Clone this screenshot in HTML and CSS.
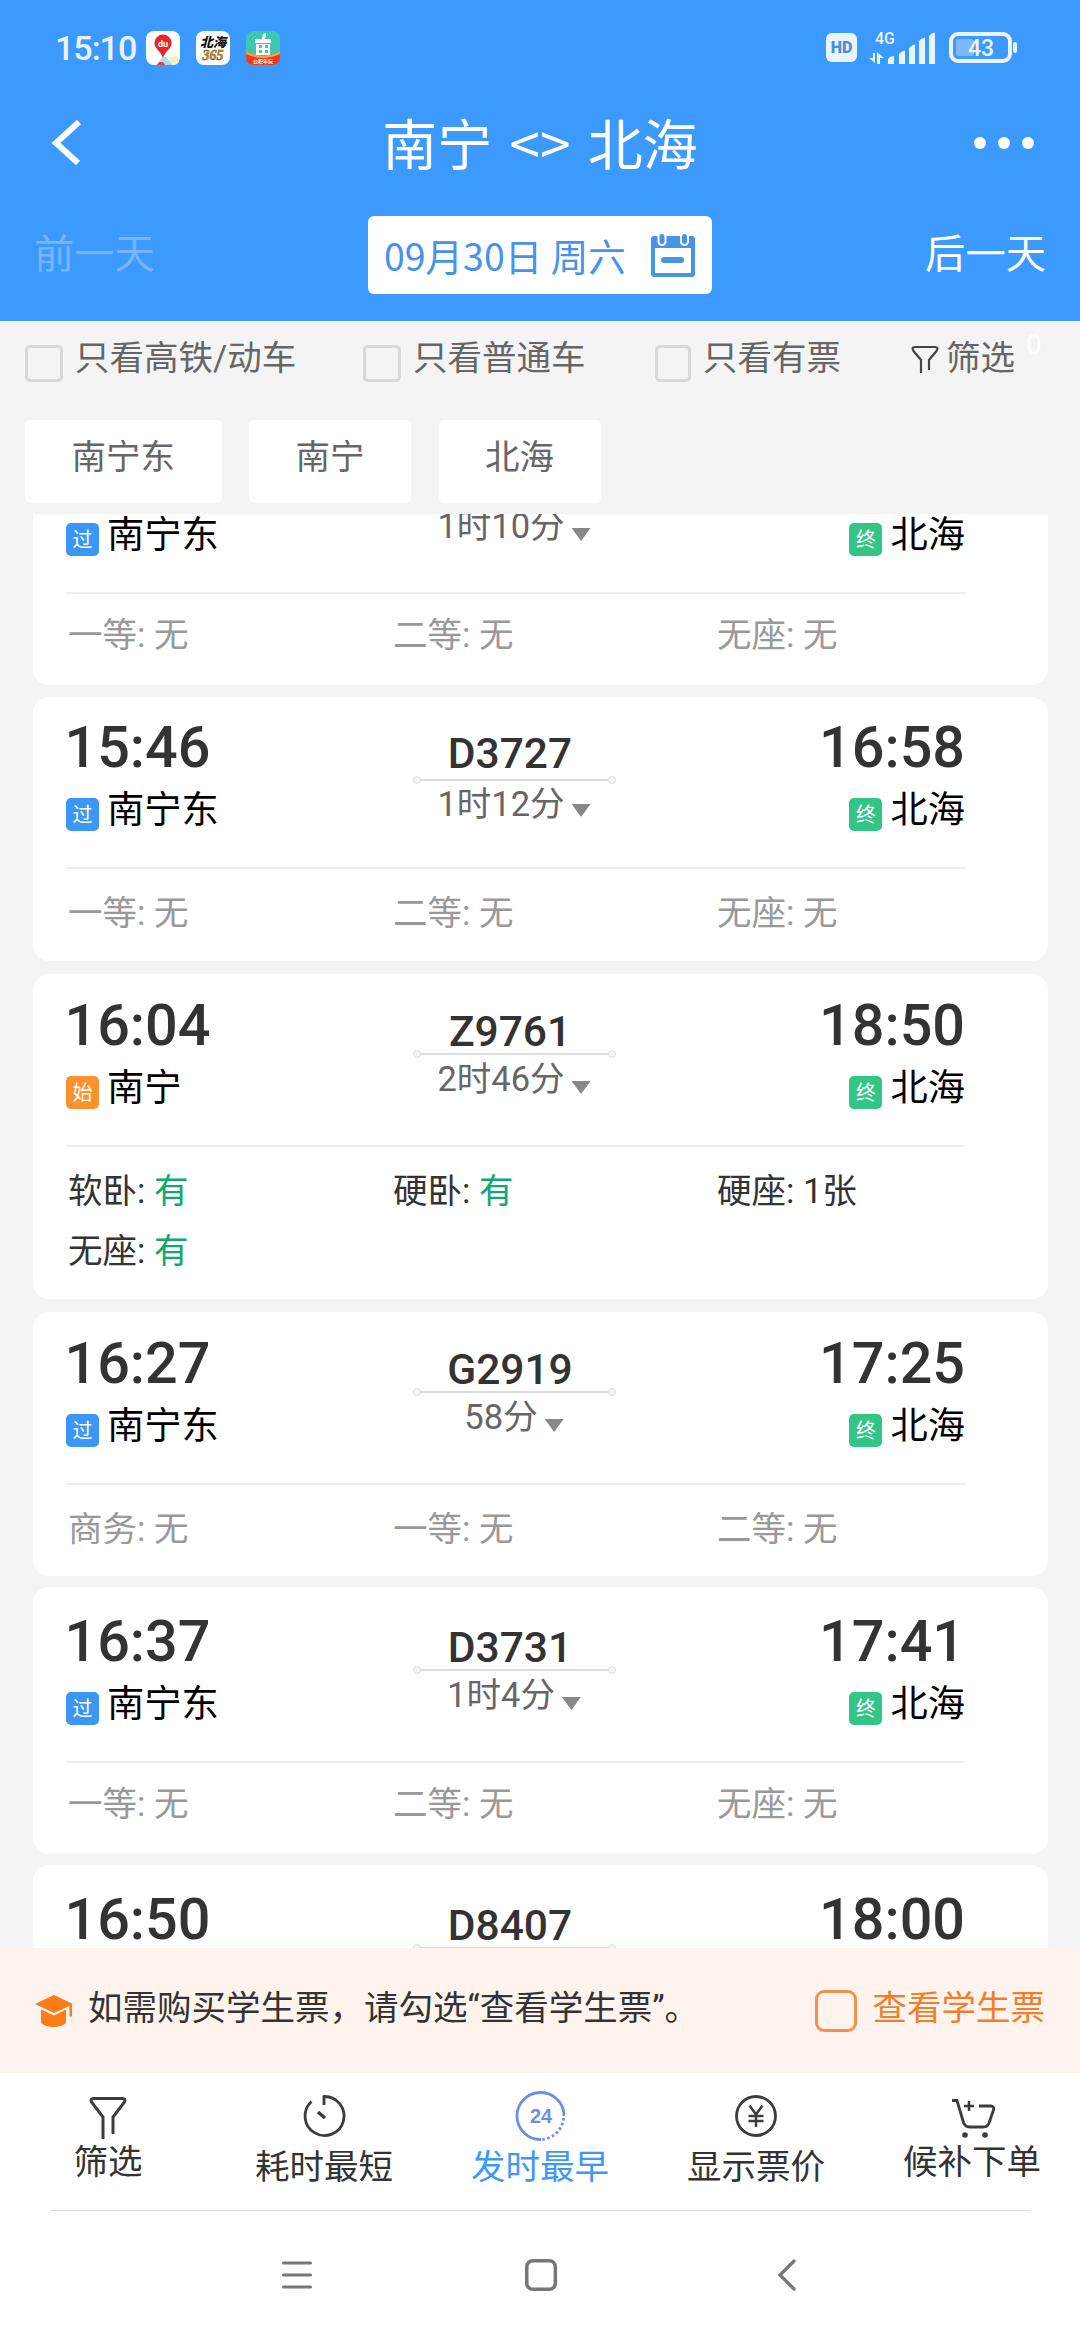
FILE: index.html
```html
<!DOCTYPE html>
<html lang="zh-CN">
<head>
    <meta charset="UTF-8">
    <meta name="viewport" content="width=device-width, initial-scale=1.0">
    <title>南宁 - 北海 车票</title>
    <link rel="stylesheet" href="styles.css">
</head>
<body>
    <header class="header">
        <!-- 状态栏 -->
        <div class="status-bar">
            <span class="clock">15:10</span>
            <div class="app-icons">
                <svg width="34" height="34" viewBox="0 0 34 34">
                    <rect width="34" height="34" rx="8" fill="#fff"/>
                    <path d="M11 34l5-8h4l7 8z" fill="#a9dcf5"/>
                    <path d="M27 34l-5-7 8-2 3 3v3q-2 3-6 3z" fill="#f6efb8"/>
                    <path d="M11 34l2-3h4l2 3z" fill="#e2403c"/>
                    <path d="M17 27C15 20 8.500 18 8.500 12a8.500 8.500 0 0 1 17 0c0 6-6.500 8-8.500 15z" fill="#e6252d"/>
                    <text x="17" y="16" class="icon-du">du</text>
                </svg>
                <svg width="34" height="34" viewBox="0 0 34 34">
                    <rect width="34" height="34" rx="8" fill="#fff"/>
                    <text x="17" y="16" class="icon-bh">北海</text>
                    <text x="17" y="29" class="icon-365">365</text>
                </svg>
                <svg width="34" height="34" viewBox="0 0 34 34">
                    <rect width="34" height="34" rx="8" fill="#3cc9b0"/>
                    <path d="M0 20q17 9 34 0v6q0 8-8 8H8q-8 0-8-8z" fill="#e63b1c"/>
                    <path d="M0 20q17 9 34 0v3q-17 8-34 0z" fill="#f6a04a"/>
                    <path d="M9 8h16v4H9zM10 13h14v11H10zM16 8l1-5 3-1v3l-2 4z" fill="#fff"/>
                    <path d="M13 14h3v3h-3zM19 14h3v3h-3zM13 19h3v3h-3zM19 19h3v3h-3z" fill="#3cc9b0"/>
                    <text x="17" y="32" class="icon-year">公积年玩</text>
                </svg>
            </div>
            <div class="signals">
                <span class="hd">HD</span>
                <svg class="signal" width="68" height="34" viewBox="0 0 68 34" fill="#e8f4ff">
                    <text x="6" y="13" class="net">4G</text>
                    <path d="M4 22h2v10L0 27h4zM10 33h-2V21l7 6h-4v6z"/>
                    <path d="M19 33v-5q2-3 6-3v8zM30 33v-10q2-3 6-3.500V33zM40 33V17q2-3 6-3.500V33zM50 33V10q2-3 6-3.500V33zM60 33V5q2-3 6-3.500V33z"/>
                </svg>
                <svg class="battery" width="70" height="32" viewBox="0 0 70 32">
                    <rect x="2" y="2" width="59" height="27" rx="7" fill="none" stroke="#e8f4ff" stroke-width="4"/>
                    <rect x="7" y="7" width="18" height="17" rx="2" fill="#7cb8fb"/>
                    <rect x="64" y="10" width="4" height="11" rx="2" fill="#e8f4ff"/>
                    <text x="32" y="24" class="level">43</text>
                </svg>
            </div>
        </div>

        <!-- 标题 -->
        <div class="title-bar">
            <svg width="32" height="46" viewBox="0 0 32 46" fill="none" stroke="#fff" stroke-width="6">
                <path d="M29 2L6 23l22 20"/>
            </svg>
            <h1>南宁 &lt;&gt; 北海</h1>
            <svg width="60" height="12" viewBox="0 0 60 12" fill="#fff">
                <circle cx="6" cy="6" r="6"/><circle cx="30" cy="6" r="6"/><circle cx="54" cy="6" r="6"/>
            </svg>
        </div>

        <!-- 日期 -->
        <div class="date-bar">
            <span class="prev">前一天</span>
            <div class="date-box">
                <span>09月30日 周六</span>
                <svg width="46" height="46" viewBox="0 0 46 46">
                    <rect x="1" y="4" width="44" height="41" rx="3" fill="#4693e8"/>
                    <rect x="5" y="16" width="36" height="25" fill="#fff"/>
                    <rect x="11" y="25" width="23" height="6" rx="3" fill="#4693e8"/>
                    <rect x="8.500" y="1" width="7" height="12" rx="3.500" fill="#4693e8" stroke="#fff" stroke-width="2"/>
                    <rect x="31" y="1" width="7" height="12" rx="3.500" fill="#4693e8" stroke="#fff" stroke-width="2"/>
                </svg>
            </div>
            <span class="next">后一天</span>
        </div>
    </header>

    <!-- 筛选条件 -->
    <div class="filters">
        <label class="f1"><i class="box"></i>只看高铁/动车</label>
        <label class="f2"><i class="box"></i>只看普通车</label>
        <label class="f3"><i class="box narrow"></i>只看有票</label>
        <div class="f4">
            <svg width="28" height="30" viewBox="0 0 28 30" fill="none" stroke="#444" stroke-width="2.200">
                <path d="M10 28V15L2.500 6Q0 2 4 2h20q4 0 1.500 4L18 15v10"/>
            </svg>
            <span>筛选</span>
            <sup>0</sup>
        </div>
    </div>
    <div class="chips">
        <span>南宁东</span>
        <span>南宁</span>
        <span>北海</span>
    </div>

    <!-- 车次列表 -->
    <main class="list">
        <section class="card low">
            <div class="trip">
                <div class="from">
                    <div class="time"></div>
                    <div class="station"><b class="pass">过</b>南宁东</div>
                </div>
                <div class="route">
                    <div class="number"></div>
                    <div class="line"></div>
                    <div class="duration">1时10分<i></i></div>
                </div>
                <div class="to">
                    <div class="time"></div>
                    <div class="station"><b class="end">终</b>北海</div>
                </div>
            </div>
            <div class="seats none"><span>一等: 无</span><span>二等: 无</span><span>无座: 无</span></div>
        </section>

        <section class="card spaced">
            <div class="trip">
                <div class="from">
                    <div class="time">15:46</div>
                    <div class="station"><b class="pass">过</b>南宁东</div>
                </div>
                <div class="route">
                    <div class="number">D3727</div>
                    <div class="line"></div>
                    <div class="duration">1时12分<i></i></div>
                </div>
                <div class="to">
                    <div class="time">16:58</div>
                    <div class="station"><b class="end">终</b>北海</div>
                </div>
            </div>
            <div class="seats none"><span>一等: 无</span><span>二等: 无</span><span>无座: 无</span></div>
        </section>

        <section class="card">
            <div class="trip">
                <div class="from">
                    <div class="time">16:04</div>
                    <div class="station"><b class="start">始</b>南宁</div>
                </div>
                <div class="route">
                    <div class="number">Z9761</div>
                    <div class="line"></div>
                    <div class="duration">2时46分<i></i></div>
                </div>
                <div class="to">
                    <div class="time">18:50</div>
                    <div class="station"><b class="end">终</b>北海</div>
                </div>
            </div>
            <div class="seats"><span>软卧: <em>有</em></span><span>硬卧: <em>有</em></span><span>硬座: 1张</span><span>无座: <em>有</em></span></div>
        </section>

        <section class="card">
            <div class="trip">
                <div class="from">
                    <div class="time">16:27</div>
                    <div class="station"><b class="pass">过</b>南宁东</div>
                </div>
                <div class="route">
                    <div class="number">G2919</div>
                    <div class="line"></div>
                    <div class="duration">58分<i></i></div>
                </div>
                <div class="to">
                    <div class="time">17:25</div>
                    <div class="station"><b class="end">终</b>北海</div>
                </div>
            </div>
            <div class="seats none"><span>商务: 无</span><span>一等: 无</span><span>二等: 无</span></div>
        </section>

        <section class="card low">
            <div class="trip">
                <div class="from">
                    <div class="time">16:37</div>
                    <div class="station"><b class="pass">过</b>南宁东</div>
                </div>
                <div class="route">
                    <div class="number">D3731</div>
                    <div class="line"></div>
                    <div class="duration">1时4分<i></i></div>
                </div>
                <div class="to">
                    <div class="time">17:41</div>
                    <div class="station"><b class="end">终</b>北海</div>
                </div>
            </div>
            <div class="seats none"><span>一等: 无</span><span>二等: 无</span><span>无座: 无</span></div>
        </section>

        <section class="card low">
            <div class="trip">
                <div class="from">
                    <div class="time">16:50</div>
                </div>
                <div class="route">
                    <div class="number">D8407</div>
                    <div class="line"></div>
                </div>
                <div class="to">
                    <div class="time">18:00</div>
                </div>
            </div>
        </section>
    </main>

    <!-- 学生票提示 -->
    <div class="notice">
        <svg width="38" height="32" viewBox="0 0 38 32" fill="#fa7d1a">
            <path d="M19 0l18 8.500v13h-2.500V11L19 18 0 9z"/>
            <path d="M6 14.500l13 6 12-6V28q-5 4-12.500 4T6 28z"/>
        </svg>
        <p>如需购买学生票，请勾选“查看学生票”。</p>
        <label><i></i>查看学生票</label>
    </div>

    <!-- 底部菜单 -->
    <nav class="tabs">
        <div class="tab high">
            <svg width="50" height="50" viewBox="0 0 50 50" fill="none" stroke="#3c3c3c" stroke-width="3">
                <path d="M20 48V26L8.500 11Q7 7.500 10.500 7.500h29Q43 7.500 41.500 11L30 26v17"/>
            </svg>
            <span>筛选</span>
        </div>
        <div class="tab">
            <svg width="50" height="50" viewBox="0 0 50 50" fill="none" stroke="#3c3c3c" stroke-width="2.800">
                <path d="M25 14V5.500A19.500 19.500 0 1 1 12.500 10.500"/>
                <path d="M19 21l7 6" stroke-width="3.500"/>
            </svg>
            <span>耗时最短</span>
        </div>
        <div class="tab active">
            <svg width="50" height="50" viewBox="0 0 50 50" fill="none" stroke="#6f8ce8" stroke-width="2.800">
                <path d="M26 48.500A23.500 23.500 0 1 1 49 25"/>
                <path d="M48.500 27A23.500 23.500 0 0 1 27 48.500" stroke-dasharray="2.500 2.500"/>
                <text x="26" y="32" class="hours">24</text>
            </svg>
            <span>发时最早</span>
        </div>
        <div class="tab">
            <svg width="50" height="50" viewBox="0 0 50 50" fill="none" stroke="#3c3c3c" stroke-width="2.800">
                <circle cx="25" cy="25" r="19.500"/>
                <path d="M18.500 14.500L25 23.500l6.500-9M25 23.500V36M17.500 25h15M17.500 30h15" stroke-width="2.500"/>
            </svg>
            <span>显示票价</span>
        </div>
        <div class="tab high">
            <svg width="50" height="50" viewBox="0 0 50 50" fill="none" stroke="#3c3c3c" stroke-width="2.800">
                <path d="M5 9.500h5l6.500 22q1.500 4.500 6 4.500h14q4 0 5.500-4l4.500-13q1-4-3-4H32"/>
                <path d="M22 10v10M17 15h10" stroke-width="2.500"/>
                <circle cx="18" cy="44" r="2.800" fill="#3c3c3c" stroke="none"/>
                <circle cx="38" cy="44" r="2.800" fill="#3c3c3c" stroke="none"/>
            </svg>
            <span>候补下单</span>
        </div>
    </nav>

    <!-- 系统导航键 -->
    <footer class="sys-nav">
        <svg width="34" height="34" viewBox="0 0 34 34" stroke="#777" stroke-width="3.200" stroke-linecap="round">
            <path d="M3.500 5h27M3.500 17h27M3.500 29h27"/>
        </svg>
        <svg width="34" height="34" viewBox="0 0 34 34" fill="none" stroke="#777" stroke-width="3.500">
            <rect x="1.750" y="2.700" width="28.600" height="28.600" rx="6"/>
        </svg>
        <svg width="34" height="34" viewBox="0 0 34 34" fill="none" stroke="#777" stroke-width="3.200" stroke-linecap="round">
            <path d="M24 3L10 17l14 14"/>
        </svg>
    </footer>
</body>
</html>
```
FILE: styles.css
```css
* {
    box-sizing: border-box;
}
body {
    margin: 0;
    width: 1080px;
    height: 2340px;
    overflow: hidden;
    display: flex;
    flex-direction: column;
    background-color: #f4f4f4;
    font-family: Roboto, "Noto Sans CJK SC", sans-serif;
    font-size: 34.5px;
    color: #333;
}
svg {
    display: block;
    flex: none;
}
i, em {
    font-style: normal;
}

/* 顶部 */
.header {
    height: 321px;
    background-color: #3c99fd;
    color: #fff;
}
.status-bar {
    height: 95px;
    padding: 0 61px 0 55px;
    display: flex;
    align-items: center;
}
.clock {
    width: 91px;
    font-size: 34px;
    font-weight: 500;
    line-height: 40px;
    letter-spacing: -1px;
    color: #e8f4ff;
}
.app-icons {
    display: flex;
    gap: 16px;
}
.icon-du {
    font: 700 9px Roboto, sans-serif;
    fill: #fff;
    text-anchor: middle;
}
.icon-bh {
    font: italic 900 13px "Noto Sans CJK SC", sans-serif;
    fill: #111;
    text-anchor: middle;
}
.icon-365 {
    font: italic 700 14px "Liberation Serif", serif;
    fill: #d99b2b;
    stroke: #7a4d10;
    stroke-width: 0.5;
    text-anchor: middle;
}
.icon-year {
    font: 700 5px "Noto Sans CJK SC", sans-serif;
    fill: #fff;
    text-anchor: middle;
}
.signals {
    margin-left: auto;
    display: flex;
    align-items: center;
}
.hd {
    width: 31px;
    height: 29px;
    margin-right: 12px;
    border-radius: 6px;
    background-color: #e8f4ff;
    color: #4a8fd8;
    font-size: 16px;
    font-weight: 900;
    line-height: 30px;
    text-align: center;
}
.signal {
    margin-right: 12px;
}
.net {
    font: 500 16px Roboto, sans-serif;
}
.level {
    font: 500 23px Roboto, sans-serif;
    fill: #e8f4ff;
    text-anchor: middle;
}
.title-bar {
    height: 95px;
    padding: 0 46px 0 50px;
    display: flex;
    align-items: center;
    justify-content: space-between;
}
.title-bar h1 {
    margin: 0 0 0 24px;
    font-family: "Noto Sans CJK SC", sans-serif;
    font-size: 55px;
    font-weight: 400;
    line-height: 76px;
    word-spacing: 5px;
    padding-bottom: 3px;
}
.date-bar {
    height: 131px;
    padding: 26px 34px 0;
    display: flex;
    justify-content: space-between;
    font-size: 40.300px;
    line-height: 78px;
}
.prev {
    color: #75b6fe;
}
.date-box {
    width: 344px;
    height: 78px;
    padding: 0 16px;
    display: flex;
    align-items: center;
    justify-content: space-between;
    border-radius: 6px;
    background-color: #fff;
    color: #4693e8;
    font-family: "Noto Sans CJK SC", sans-serif;
    font-size: 37.500px;
}

/* 筛选 */
.filters {
    height: 99px;
    padding: 12px 25px 0;
    display: flex;
    line-height: 50px;
    color: #666;
}
.filters label {
    display: flex;
}
.filters .f1 {
    width: 338px;
}
.filters .f2 {
    width: 292px;
}
.filters .f3 {
    width: 256px;
}
.box {
    width: 38px;
    height: 37px;
    margin: 12px 12px 0 0;
    border: 3px solid #d8d8d8;
    border-radius: 5px;
}
.box.narrow {
    width: 36px;
}
.f4 {
    display: flex;
}
.f4 svg {
    margin: 12px 7px 0 0;
}
.f4 sup {
    margin-left: 11px;
    font-size: 28px;
    line-height: 24px;
    color: #fff;
}
.chips {
    height: 94px;
    padding-left: 25px;
    display: flex;
    gap: 27.500px;
}
.chips span {
    height: 83px;
    padding: 0 46.500px;
    border-radius: 5px;
    background-color: #fff;
    line-height: 75px;
    color: #666;
}

/* 车次 */
.list {
    height: 1434px;
    overflow: hidden;
}
.card {
    width: 1015px;
    margin: 13px 0 0 33px;
    padding: 22px 83px 18px 33px;
    border-radius: 16px;
    background-color: #fff;
}
.card.low {
    margin-top: 11px;
    padding-top: 25px;
    padding-bottom: 20px;
}
.card:first-child {
    margin: -96px 0 -1px 33px;
}
.card.spaced {
    padding-top: 21px;
}
.trip {
    height: 151px;
    display: grid;
    grid-template-columns: 347px 203px 1fr;
    border-bottom: 2px solid #eee;
}
.to {
    display: flex;
    flex-direction: column;
    align-items: flex-end;
}
.time {
    height: 60px;
    font-size: 57.500px;
    font-weight: 500;
    line-height: 60px;
}
.from .time {
    margin-left: -1.500px;
}
.station {
    margin-top: 10px;
    display: flex;
    font-size: 37.300px;
    line-height: 44px;
    color: #000;
}
.station b {
    width: 33px;
    height: 33px;
    margin: 10px 8px 0 0;
    border-radius: 5px;
    color: #fff;
    font-size: 20px;
    font-weight: 400;
    line-height: 34px;
    text-align: center;
}
.pass {
    background-color: #3c96f5;
}
.start {
    background-color: #fb922b;
}
.end {
    background-color: #33c585;
}
.number {
    height: 50px;
    margin: 11px 9px 0 0;
    font-size: 42.500px;
    font-weight: 500;
    line-height: 50px;
    text-align: center;
}
/* 两端带圆点的细线 */
.line {
    height: 2px;
    margin: -4px 4px 0;
    display: flex;
    align-items: center;
    justify-content: space-between;
    background-color: #ddd;
}
.line::before, .line::after {
    content: "";
    width: 6px;
    height: 6px;
    margin: 0 -4px;
    border: 1.5px solid #ddd;
    border-radius: 50%;
    background-color: #f4f4f4;
}
.duration {
    margin-top: 4px;
    display: flex;
    justify-content: center;
    line-height: 40px;
    color: #666;
}
.duration i {
    width: 19px;
    height: 13px;
    margin: 22px 1px 0 7px;
    background-color: #888;
    clip-path: polygon(0 0, 100% 0, 50% 100%);
}
.spaced .line {
    margin-top: 0;
}
.spaced .duration {
    margin-top: 3px;
}
.spaced .duration i {
    margin-top: 20px;
}
.seats {
    padding: 14px 0 0 2px;
    display: grid;
    grid-template-columns: 325px 324px 1fr;
    line-height: 60px;
}
.low .seats {
    padding-top: 11px;
}
.seats.none {
    margin-bottom: -1px;
    color: #999;
}
.spaced .seats.none {
    margin-bottom: 0;
}
.low .seats.none {
    margin-bottom: 0;
}
.seats em {
    color: #0fa870;
}

/* 学生票 */
.notice {
    height: 125px;
    padding: 0 35px;
    display: flex;
    align-items: center;
    background-color: #fff3ed;
}
.notice p {
    flex: 1;
    margin: 0 0 5px 15px;
    line-height: 50px;
}
.notice label {
    margin-bottom: 5px;
    display: flex;
    line-height: 50px;
    color: #f07f2c;
}
.notice label i {
    width: 42px;
    height: 42px;
    margin: 7px 16px 0 0;
    border: 3px solid #f5914a;
    border-radius: 9px;
}

/* 底部菜单 */
.tabs {
    height: 137px;
    padding-top: 18px;
    display: grid;
    grid-template-columns: repeat(5, 216px);
    background-color: #fff;
}
.tab {
    display: flex;
    flex-direction: column;
    align-items: center;
    line-height: 50px;
}
.tab span {
    margin-top: 1px;
}
.tab.high span {
    margin-top: -4px;
}
.tab.active {
    color: #3f97f6;
}
.hours {
    font: 700 20px "Liberation Sans", sans-serif;
    fill: #6f8ce8;
    stroke: none;
    text-anchor: middle;
}
.sys-nav {
    flex: 1;
    padding: 48px 276px 0 280px;
    display: flex;
    justify-content: space-between;
    background-color: #fff;
    background-image: linear-gradient(#ddd, #ddd);
    background-size: 979px 1px;
    background-position: 51px 0;
    background-repeat: no-repeat;
}
```
